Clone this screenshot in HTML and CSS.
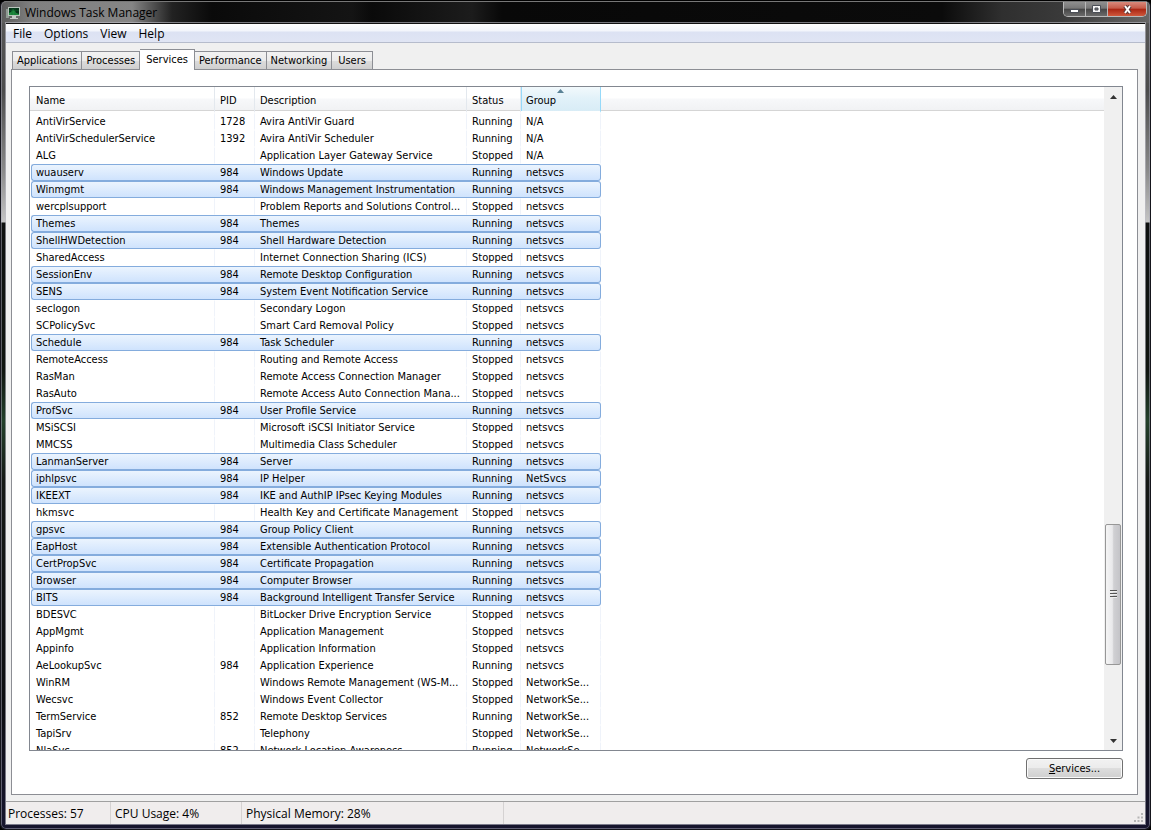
FILE: index.html
```html
<!DOCTYPE html>
<html lang="en">
<head>
    <meta charset="UTF-8">
    <meta name="viewport" content="width=device-width, initial-scale=1.0">
    <title>Windows Task Manager</title>
    <link rel="stylesheet" href="styles.css">
</head>
<body>
    <div class="window">
        <header class="titlebar">
            <svg class="app-icon" width="14" height="14" viewBox="0 0 14 14">
                <rect x="0" y="3" width="3" height="9" fill="#8f9a93"/>
                <rect x="2" y="1" width="12" height="9" fill="#b9c4bd"/>
                <rect x="3" y="2" width="10" height="7" fill="#06351a"/>
                <path d="M3 9V7l2-1 2-3 2 2 1 2 3 1v1z" fill="#1f8a3f"/>
                <path d="M3 4.500h10M6 2v7M9 2v7" stroke="#0d5c2b" stroke-width=".5"/>
                <path d="M6 10h4v2h2v1H4v-1h2z" fill="#c3cac6"/>
            </svg>
            <h1>Windows Task Manager</h1>
            <div class="caption-buttons">
                <button type="button" aria-label="Minimize">
                    <svg width="11" height="9" viewBox="0 0 11 9"><rect x="1.500" y="4.500" width="8" height="3" fill="#fff" stroke="#4b4f57"/></svg>
                </button>
                <button type="button" aria-label="Maximize">
                    <svg width="11" height="9" viewBox="0 0 11 9"><path d="M1.500.500h8v7h-8z" fill="#f5f5f5" stroke="#4b4f57"/><path d="M4 3h3v2H4z" fill="#777" stroke="#4b4f57"/></svg>
                </button>
                <button type="button" class="close" aria-label="Close">
                    <svg width="11" height="9" viewBox="0 0 11 9"><path d="M3 1l5 7M8 1l-5 7" stroke="#5d3b3b" stroke-width="4"/><path d="M3 1l5 7M8 1l-5 7" stroke="#fff" stroke-width="2"/></svg>
                </button>
            </div>
        </header>

        <div class="client">
            <nav class="menubar">
                <button type="button">File</button>
                <button type="button">Options</button>
                <button type="button">View</button>
                <button type="button">Help</button>
            </nav>

            <main class="content">
                <div class="tabs" role="tablist">
                    <button type="button" role="tab">Applications</button>
                    <button type="button" role="tab">Processes</button>
                    <button type="button" role="tab" class="active" aria-selected="true">Services</button>
                    <button type="button" role="tab">Performance</button>
                    <button type="button" role="tab">Networking</button>
                    <button type="button" role="tab">Users</button>
                </div>

                <section class="panel" role="tabpanel">
                    <div class="list">
                        <div class="list-view">
                            <table class="services">
                                <colgroup>
                                    <col class="col-name"><col class="col-pid"><col class="col-desc"><col class="col-status"><col class="col-group">
                                </colgroup>
                                <thead>
                                    <tr>
                                        <th>Name</th><th>PID</th><th>Description</th><th>Status</th>
                                        <th class="sorted" aria-sort="ascending">Group<svg class="sort-arrow" width="7" height="4" viewBox="0 0 7 4"><path d="M0 4l3.500-4L7 4z" fill="#5a8296"/></svg></th>
                                    </tr>
                                </thead>
                                <tbody>
                                    <tr><td>AntiVirService</td><td>1728</td><td>Avira AntiVir Guard</td><td>Running</td><td>N/A</td></tr>
                                    <tr><td>AntiVirSchedulerService</td><td>1392</td><td>Avira AntiVir Scheduler</td><td>Running</td><td>N/A</td></tr>
                                    <tr><td>ALG</td><td></td><td>Application Layer Gateway Service</td><td>Stopped</td><td>N/A</td></tr>
                                    <tr class="selected"><td>wuauserv</td><td>984</td><td>Windows Update</td><td>Running</td><td>netsvcs</td></tr>
                                    <tr class="selected"><td>Winmgmt</td><td>984</td><td>Windows Management Instrumentation</td><td>Running</td><td>netsvcs</td></tr>
                                    <tr><td>wercplsupport</td><td></td><td>Problem Reports and Solutions Control...</td><td>Stopped</td><td>netsvcs</td></tr>
                                    <tr class="selected"><td>Themes</td><td>984</td><td>Themes</td><td>Running</td><td>netsvcs</td></tr>
                                    <tr class="selected"><td>ShellHWDetection</td><td>984</td><td>Shell Hardware Detection</td><td>Running</td><td>netsvcs</td></tr>
                                    <tr><td>SharedAccess</td><td></td><td>Internet Connection Sharing (ICS)</td><td>Stopped</td><td>netsvcs</td></tr>
                                    <tr class="selected"><td>SessionEnv</td><td>984</td><td>Remote Desktop Configuration</td><td>Running</td><td>netsvcs</td></tr>
                                    <tr class="selected"><td>SENS</td><td>984</td><td>System Event Notification Service</td><td>Running</td><td>netsvcs</td></tr>
                                    <tr><td>seclogon</td><td></td><td>Secondary Logon</td><td>Stopped</td><td>netsvcs</td></tr>
                                    <tr><td>SCPolicySvc</td><td></td><td>Smart Card Removal Policy</td><td>Stopped</td><td>netsvcs</td></tr>
                                    <tr class="selected"><td>Schedule</td><td>984</td><td>Task Scheduler</td><td>Running</td><td>netsvcs</td></tr>
                                    <tr><td>RemoteAccess</td><td></td><td>Routing and Remote Access</td><td>Stopped</td><td>netsvcs</td></tr>
                                    <tr><td>RasMan</td><td></td><td>Remote Access Connection Manager</td><td>Stopped</td><td>netsvcs</td></tr>
                                    <tr><td>RasAuto</td><td></td><td>Remote Access Auto Connection Mana...</td><td>Stopped</td><td>netsvcs</td></tr>
                                    <tr class="selected"><td>ProfSvc</td><td>984</td><td>User Profile Service</td><td>Running</td><td>netsvcs</td></tr>
                                    <tr><td>MSiSCSI</td><td></td><td>Microsoft iSCSI Initiator Service</td><td>Stopped</td><td>netsvcs</td></tr>
                                    <tr><td>MMCSS</td><td></td><td>Multimedia Class Scheduler</td><td>Stopped</td><td>netsvcs</td></tr>
                                    <tr class="selected"><td>LanmanServer</td><td>984</td><td>Server</td><td>Running</td><td>netsvcs</td></tr>
                                    <tr class="selected"><td>iphlpsvc</td><td>984</td><td>IP Helper</td><td>Running</td><td>NetSvcs</td></tr>
                                    <tr class="selected"><td>IKEEXT</td><td>984</td><td>IKE and AuthIP IPsec Keying Modules</td><td>Running</td><td>netsvcs</td></tr>
                                    <tr><td>hkmsvc</td><td></td><td>Health Key and Certificate Management</td><td>Stopped</td><td>netsvcs</td></tr>
                                    <tr class="selected"><td>gpsvc</td><td>984</td><td>Group Policy Client</td><td>Running</td><td>netsvcs</td></tr>
                                    <tr class="selected"><td>EapHost</td><td>984</td><td>Extensible Authentication Protocol</td><td>Running</td><td>netsvcs</td></tr>
                                    <tr class="selected"><td>CertPropSvc</td><td>984</td><td>Certificate Propagation</td><td>Running</td><td>netsvcs</td></tr>
                                    <tr class="selected"><td>Browser</td><td>984</td><td>Computer Browser</td><td>Running</td><td>netsvcs</td></tr>
                                    <tr class="selected"><td>BITS</td><td>984</td><td>Background Intelligent Transfer Service</td><td>Running</td><td>netsvcs</td></tr>
                                    <tr><td>BDESVC</td><td></td><td>BitLocker Drive Encryption Service</td><td>Stopped</td><td>netsvcs</td></tr>
                                    <tr><td>AppMgmt</td><td></td><td>Application Management</td><td>Stopped</td><td>netsvcs</td></tr>
                                    <tr><td>Appinfo</td><td></td><td>Application Information</td><td>Stopped</td><td>netsvcs</td></tr>
                                    <tr><td>AeLookupSvc</td><td>984</td><td>Application Experience</td><td>Running</td><td>netsvcs</td></tr>
                                    <tr><td>WinRM</td><td></td><td>Windows Remote Management (WS-M...</td><td>Stopped</td><td>NetworkSe...</td></tr>
                                    <tr><td>Wecsvc</td><td></td><td>Windows Event Collector</td><td>Stopped</td><td>NetworkSe...</td></tr>
                                    <tr><td>TermService</td><td>852</td><td>Remote Desktop Services</td><td>Running</td><td>NetworkSe...</td></tr>
                                    <tr><td>TapiSrv</td><td></td><td>Telephony</td><td>Stopped</td><td>NetworkSe...</td></tr>
                                    <tr><td>NlaSvc</td><td>852</td><td>Network Location Awareness</td><td>Running</td><td>NetworkSe...</td></tr>
                                </tbody>
                            </table>
                        </div>
                        <div class="scrollbar">
                            <button type="button" aria-label="Scroll up"><svg width="7" height="4" viewBox="0 0 7 4"><path d="M0 4l3.500-4L7 4z" fill="#333"/></svg></button>
                            <div class="track">
                                <div class="thumb"><i></i><i></i><i></i></div>
                            </div>
                            <button type="button" aria-label="Scroll down"><svg width="7" height="4" viewBox="0 0 7 4"><path d="M0 0l3.500 4L7 0z" fill="#333"/></svg></button>
                        </div>
                    </div>
                    <button type="button" class="services-btn"><u>S</u>ervices...</button>
                </section>
            </main>

            <footer class="statusbar">
                <span class="part processes">Processes: 57</span>
                <span class="part cpu">CPU Usage: 4%</span>
                <span class="part memory">Physical Memory: 28%</span>
                <svg class="grip" width="10" height="10" viewBox="0 0 10 10" fill="#b5b5b5">
                    <path d="M7 0h2v2H7zM7 3.500h2v2H7zM3.500 3.500h2v2h-2zM7 7h2v2H7zM3.500 7h2v2h-2zM0 7h2v2H0z"/>
                </svg>
            </footer>
        </div>
    </div>
</body>
</html>
```
FILE: styles.css
```css
* {
    box-sizing: border-box;
}

body {
    margin: 0;
    background: #000;
    color: #000;
    font-family: Tahoma, "DejaVu Sans Condensed", sans-serif;
    font-size: 11px;
}

button {
    margin: 0;
    padding: 0;
    border: none;
    background: none;
    color: inherit;
    font: inherit;
}

svg {
    display: block;
}

/* Window frame */
.window {
    display: flex;
    flex-direction: column;
    height: 100vh;
    padding: 0 5px 5px;
    border: 1px solid #15151c;
    border-top-color: #000;
    border-radius: 6px;
    background: linear-gradient(#5a5a5a 0, #4c4c4c 90px, #8a8a8a 170px, #c4c4c4 221px, #0e100f 222px, #101510 370px, #23402a 420px, #151815 480px, #0c0d10 700px, #17152e 100%);
    box-shadow: inset 0 0 0 1px rgba(170, 170, 185, 0.5);
}

.titlebar {
    display: flex;
    flex: none;
    align-items: center;
    height: 22px;
    margin: 0 -4px;
    padding: 0 2px 0 4px;
    border-top: 1px solid #777;
    border-radius: 5px 5px 0 0;
    background: linear-gradient(90deg, #5c5c5c 0, #808080 30px, #858585 130px, #222 170px, #0a0a0a 210px, #141414 350px, #0a0a0a 370px, #1c1c1c 470px, #080808 500px, #0b0b0b 940px, #2f2f2f 1000px, #3a3a3a 1060px, #666 100%);
}

.titlebar h1 {
    flex: 1;
    margin: 0 0 0 5px;
    font: 12px/20px "Segoe UI", "Open Sans", sans-serif;
}

.caption-buttons {
    display: flex;
    align-self: flex-start;
    height: 15px;
    border: 1px solid #b9b9b9;
    border-top: none;
    border-radius: 0 0 5px 5px;
    overflow: hidden;
}

.caption-buttons button {
    display: flex;
    align-items: center;
    justify-content: center;
    width: 22px;
    border-right: 1px solid #b9b9b9;
    background: linear-gradient(#8f8f8f, #777 45%, #454545 50%, #6b6b6b);
}

.caption-buttons .close {
    width: 38px;
    border-right: none;
    background: linear-gradient(#d98a7c, #c65a48 45%, #a92412 50%, #d0583c);
}

.client {
    display: flex;
    flex: 1;
    flex-direction: column;
    min-height: 0;
    border: 1px solid #111;
    border-width: 1px 0 0;
    background: #f0f0f0;
    box-shadow: 0 0 0 1px rgba(190, 190, 200, 0.6);
}

/* Menu */
.menubar {
    display: flex;
    flex: none;
    height: 19px;
    padding-left: 1px;
    border-bottom: 1px solid #b6bccc;
    background: linear-gradient(#fff 0, #f2f5fb 7px, #dce2f3 8px, #e0e5f4 100%);
}

.menubar button {
    padding: 0 6px;
    font: 12px/20px "Segoe UI", "Open Sans", sans-serif;
}

/* Tabs */
.content {
    display: flex;
    flex: 1;
    flex-direction: column;
    min-height: 0;
    padding: 6px 7px 6px 5px;
}

.tabs {
    display: flex;
    flex: none;
    align-items: flex-end;
    padding-left: 1px;
}

.tabs button {
    height: 18px;
    padding: 0 4px;
    border: 1px solid #8c8e94;
    border-bottom: none;
    border-left-width: 0;
    background: linear-gradient(#f2f2f2, #ebebeb 50%, #dddddd 50%, #cfcfcf);
    line-height: 18px;
}

.tabs button:first-child {
    border-left-width: 1px;
}

.tabs button:last-child {
    padding: 0 6px;
}

.tabs .active {
    z-index: 1;
    height: 21px;
    margin-bottom: -1px;
    padding: 0 6px;
    background: #fff;
    line-height: 18px;
}

.panel {
    display: flex;
    flex: 1;
    flex-direction: column;
    gap: 7px;
    min-height: 0;
    padding: 16px 14px 15px 17px;
    border: 1px solid #8c8e94;
    background: #fff;
}

/* Service list */
.list {
    display: flex;
    flex: 1;
    min-height: 0;
    border: 1px solid #828790;
    background: #fff;
}

.list-view {
    flex: 1;
    padding-left: 1px;
    overflow: hidden;
    background: linear-gradient(#fff 0, #fff 11px, #f7f8fa 12px, #f1f2f4 23px, #d5d5d5 23px, #d5d5d5 24px, #fff 24px);
}

.services {
    width: 570px;
    border-collapse: separate;
    border-spacing: 0;
    table-layout: fixed;
}

.col-name { width: 184px; }
.col-pid { width: 40px; }
.col-desc { width: 212px; }
.col-status { width: 54px; }
.col-group { width: 80px; }

.services th {
    position: relative;
    height: 26px;
    padding: 4px 0 0 5px;
    border-right: 1px solid #e3e8ee;
    border-bottom: 2px solid transparent;
    background-clip: padding-box;
    font-weight: normal;
    line-height: 20px;
    text-align: left;
}

.services .sorted {
    border-right-color: #96d9f9;
    background: linear-gradient(#f2f9fc, #e1f1f9 50%, #d8ecf6) padding-box;
    box-shadow: inset 1px 0 #96d9f9;
}

.sort-arrow {
    position: absolute;
    top: 2px;
    left: 36px;
}

.services td {
    height: 17px;
    padding: 0 0 0 5px;
    border: solid transparent;
    border-width: 1px 1px 1px 0;
    border-right-color: #eff3fa;
    line-height: 15px;
    white-space: nowrap;
}

.services .selected td {
    border-right-width: 0;
    border-color: #84acdd;
    background: linear-gradient(#ebf4fe, #cfe3fd);
}

.services .selected td:first-child {
    padding-left: 4px;
    border-left-width: 1px;
    border-radius: 3px 0 0 3px;
}

.services .selected td:last-child {
    border-right-width: 1px;
    border-radius: 0 3px 3px 0;
}

/* Scroll bar */
.scrollbar {
    display: flex;
    flex: none;
    flex-direction: column;
    width: 18px;
    padding: 1px;
    background: #f0f0f0;
}

.scrollbar button {
    display: flex;
    flex: none;
    align-items: center;
    justify-content: center;
    height: 17px;
}

.track {
    display: flex;
    flex: 1;
    flex-direction: column;
}

.track::before {
    content: "";
    flex: 420;
}

.track::after {
    content: "";
    flex: 67;
}

.thumb {
    display: flex;
    flex: 140;
    flex-direction: column;
    align-items: center;
    justify-content: center;
    gap: 1px;
    border: 1px solid #979797;
    border-radius: 2px;
    background: linear-gradient(90deg, #f5f5f5, #e9e9eb 45%, #d0d0d3 55%, #c4c4c8);
}

.thumb i {
    width: 7px;
    height: 2px;
    border-top: 1px solid #555;
    background: #eee;
}

.services-btn {
    flex: none;
    align-self: flex-end;
    width: 97px;
    height: 21px;
    border: 1px solid #707070;
    border-radius: 3px;
    background: linear-gradient(#f2f2f2, #ebebeb 50%, #dddddd 50%, #cfcfcf);
    box-shadow: inset 0 0 0 1px #fafafa;
}

/* Status bar */
.statusbar {
    position: relative;
    display: flex;
    flex: none;
    height: 23px;
    border-top: 1px solid #a0a0a0;
    background: #f0eded;
    font: 12px/24px "Segoe UI", "Open Sans", sans-serif;
}

.part {
    padding-left: 4px;
    border-right: 1px solid #d5d2d2;
}

.processes {
    width: 105px;
    padding-left: 2px;
}

.cpu {
    width: 131px;
}

.memory {
    width: 262px;
}

.grip {
    position: absolute;
    right: 1px;
    bottom: 1px;
}
```
